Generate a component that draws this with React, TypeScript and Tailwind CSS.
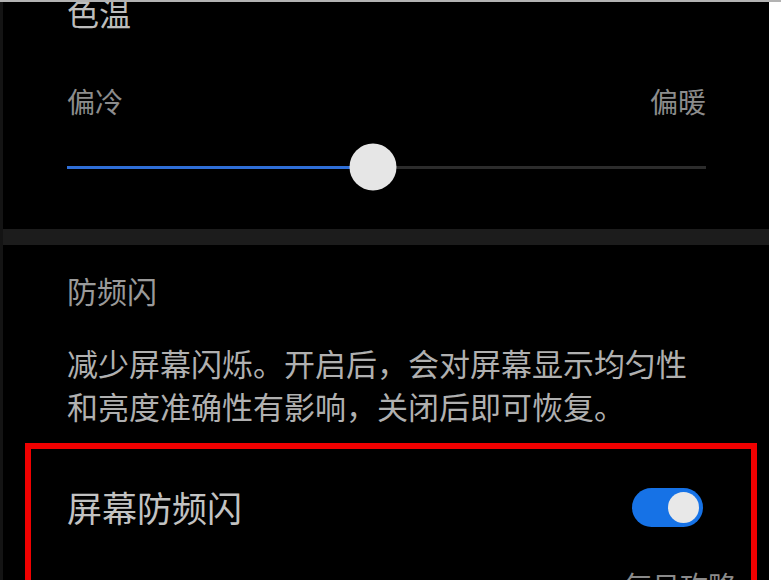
import React from 'react'

const font = { fontFamily: '"Noto Sans CJK SC", "Noto Sans", sans-serif' }

export default function App() {
  const value = 0.479

  return (
    <div className="relative w-[781px] h-[580px] overflow-hidden bg-white" style={font}>
      <div className="h-[2px] bg-[#b3b3b3]" />
      <div className="flex h-[578px]">
        <div className="w-[3px] bg-[#141414]" />
        <div className="w-[766px] bg-black flex flex-col overflow-hidden">
          {/* 色温 */}
          <div className="shrink-0 -mt-[10px] h-[40px] pl-[64px] text-[32px] leading-[40px] text-[#bdbdbd]">色温</div>

          <div className="shrink-0 mt-[49px] h-[40px] pl-[64px] pr-[63px] flex justify-between text-[28px] leading-[40px] text-[#8c8c8c]">
            <span>偏冷</span>
            <span>偏暖</span>
          </div>

          {/* slider */}
          <div className="shrink-0 mt-[22px] h-[48px] pl-[64px] pr-[63px] flex items-center">
            <div className="relative w-full h-[3px] bg-[#2c2c2c]">
              <div className="absolute left-0 top-0 h-[3px] bg-[#2f6fd8]" style={{ width: `${value * 100}%` }} />
              <div
                className="absolute top-1/2 w-[47px] h-[47px] -translate-x-1/2 -translate-y-1/2 rounded-full bg-[#e6e6e6]"
                style={{ left: `${value * 100}%` }}
              />
            </div>
          </div>

          <div className="shrink-0 mt-[38px] h-[16px] bg-[#1c1c1c]" />

          <div className="shrink-0 mt-[25px] h-[40px] pl-[64px] text-[30px] leading-[40px] text-[#9a9a9a]">防频闪</div>

          <div className="shrink-0 mt-[31px] pl-[64px] text-[31px] leading-[43px] text-[#b0b0b0]">
            <div>减少屏幕闪烁。开启后，会对屏幕显示均匀性</div>
            <div>和亮度准确性有影响，关闭后即可恢复。</div>
          </div>

          <div className="shrink-0 mt-[16px] ml-[22px] w-[732px] h-[150px] border-[6px] border-[#f00000]">
            <div className="mt-[36px] h-[44px] pl-[36px] pr-[48px] flex items-center justify-between">
              <span className="text-[35px] leading-[44px] text-[#c2c2c2]">屏幕防频闪</span>
              <div className="w-[71px] h-[39px] rounded-full bg-[#1672e6] flex items-center justify-end pr-[4px]">
                <div className="w-[31px] h-[31px] rounded-full bg-[#e8e8e8]" />
              </div>
            </div>
          </div>
        </div>
      </div>
      <div className="absolute left-[624px] top-[569px] text-[28px] leading-[32px] text-[#8a8a8a]">每日攻略</div>
    </div>
  )
}
